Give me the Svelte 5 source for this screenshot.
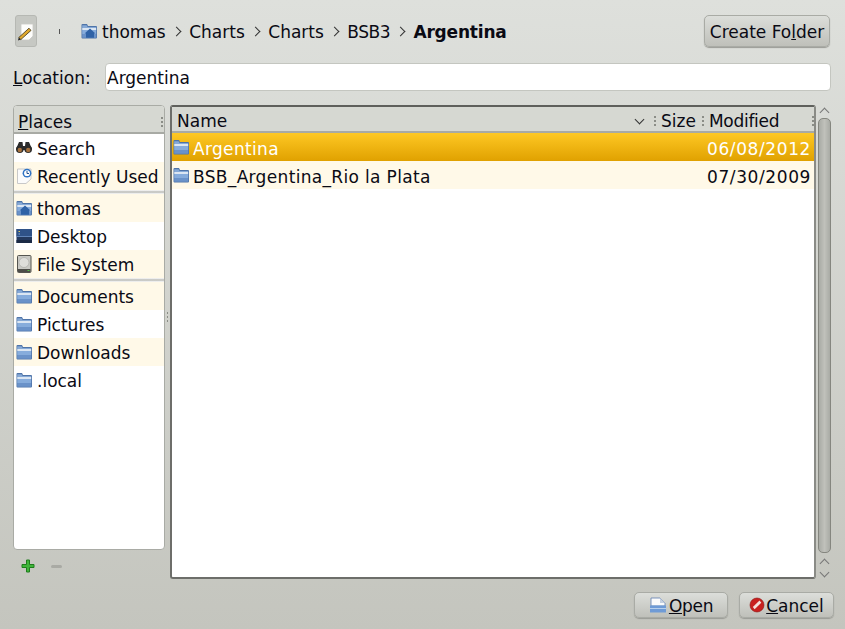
<script>
  const crumbs = ["Charts", "Charts", "BSB3"];
  const places = [
    [
      { name: "Search", icon: "search" },
      { name: "Recently Used", icon: "recent", alt: true },
    ],
    [
      { name: "thomas", icon: "home", alt: true },
      { name: "Desktop", icon: "desktop" },
      { name: "File System", icon: "disk", alt: true },
    ],
    [
      { name: "Documents", icon: "folder", alt: true },
      { name: "Pictures", icon: "folder" },
      { name: "Downloads", icon: "folder", alt: true },
      { name: ".local", icon: "folder" },
    ],
  ];
  const files = [
    { name: "Argentina", date: "06/08/2012", selected: true },
    { name: "BSB_Argentina_Rio la Plata", date: "07/30/2009" },
  ];
</script>

{#snippet folder(home)}
  <svg class="icon" viewBox="0 0 16 16">
    <path d="M0.5 2 Q0.5 1 1.5 1 L6 1 L7 3 L15 3 Q16 3 16 4 L16 14.5 Q16 15.5 15 15.5 L1.5 15.5 Q0.5 15.5 0.5 14.5Z" fill="#4f74a8" />
    <path d="M1.2 2.2 L5.6 2.2 L6.6 4 L15.2 4 L15.2 5 L1.2 5Z" fill="#86a9d6" />
    <path d="M1.2 5 L15.2 5 L15.2 7 L1.2 7Z" fill="#dbe6f3" />
    <path d="M1.2 7 L15.2 7 L15.2 11 L1.2 11Z" fill="#86acdc" />
    <path d="M1.2 11 L15.2 11 L15.2 14.8 L1.2 14.8Z" fill="#6a92c9" />
    {#if home}
      <path d="M3.6 10.5 L9 5.6 L14.4 10.5 L13 10.5 L13 14.8 L5 14.8 L5 10.5Z" fill="#2f62a6" />
    {/if}
  </svg>
{/snippet}

{#snippet icon(kind)}
  {#if kind === "search"}
    <svg class="icon" viewBox="0 0 16 16">
      <path d="M3 2 L6.5 2 L7 6 L9 6 L9.5 2 L13 2 L16 9 L9 10 L7 10 L0 9Z" fill="#2b2b2b" />
      <circle cx="3.8" cy="9.2" r="3.8" fill="#2b2b2b" />
      <circle cx="12.2" cy="9.2" r="3.8" fill="#2b2b2b" />
      <circle cx="3.8" cy="10" r="2.2" fill="#a5703c" />
      <circle cx="12.2" cy="10" r="2.2" fill="#a5703c" />
    </svg>
  {:else if kind === "recent"}
    <svg class="icon" viewBox="0 0 16 16">
      <path d="M1.5 1 L15 1 L15 11 L10 15.5 L1.5 15.5Z" fill="#fbfbfb" stroke="#c8c8c8" />
      <circle cx="11" cy="5.2" r="4.4" fill="#2f73c4" />
      <circle cx="11" cy="5.2" r="2.9" fill="#fff" />
      <path d="M11 3 L11 5.5 L13 5.5" fill="none" stroke="#1f4f90" />
    </svg>
  {:else if kind === "home"}
    {@render folder(true)}
  {:else if kind === "desktop"}
    <svg class="icon" viewBox="0 0 16 16">
      <rect x="0.5" y="1" width="15.5" height="14" fill="#24395e" />
      <rect x="0.5" y="1" width="15.5" height="7" fill="#2f5288" />
      <rect x="0.5" y="8" width="15.5" height="1" fill="#5f83b8" />
      <rect x="0.5" y="12" width="15.5" height="3" fill="#1b2a46" />
      <rect x="2.5" y="3" width="1.5" height="1" fill="#d8c860" />
      <rect x="2.5" y="5.5" width="1.5" height="1" fill="#8fb0d8" />
    </svg>
  {:else if kind === "disk"}
    <svg class="icon tall" viewBox="0 0 16 18">
      <rect x="1.5" y="0.5" width="13.5" height="17" rx="1" fill="#c9c9c4" stroke="#55554f" />
      <circle cx="8" cy="7.5" r="5" fill="#dededa" stroke="#a5a5a0" stroke-width="0.6" />
      <rect x="2" y="14" width="12.5" height="3" fill="#4d4d48" />
      <rect x="11.5" y="15" width="2" height="1" fill="#59c04b" />
    </svg>
  {:else}
    {@render folder(false)}
  {/if}
{/snippet}

<div class="dialog">
  <div class="toolbar">
    <button class="edit" aria-label="Edit path">
      <svg viewBox="0 0 16 18" width="16" height="18">
        <path d="M3 1 L15 1 L15 13 L11 17 L3 17Z" fill="#fdfdfb" stroke="#c9c9c5" stroke-width="0.8" />
        <path d="M0.8 14.5 L11 5.2 L13 7.4 L2.8 16.6Z" fill="#e0a92e" stroke="#3e3316" stroke-width="0.8" />
        <path d="M0 17.6 L0.8 14.5 L2.8 16.6Z" fill="#222" />
      </svg>
    </button>
    <span class="tick"></span>
    <nav class="crumbs">
      <span class="crumb first">{@render folder(true)}<span class="label">thomas</span></span>
      {#each crumbs as crumb}
        <span class="chev"></span>
        <span class="crumb label" class:short={crumb === "BSB3"}>{crumb}</span>
      {/each}
      <span class="chev"></span>
      <span class="crumb label current">Argentina</span>
    </nav>
    <button class="btn create">Create Fo<u>l</u>der</button>
  </div>

  <div class="location">
    <span class="loc-label"><u>L</u>ocation:</span>
    <div class="loc-input">Argentina</div>
  </div>

  <div class="main">
    <div class="side">
      <div class="places">
        <div class="head places-head"><span><u>P</u>laces</span><i class="grip"></i></div>
        {#each places as group, g}
          {#if g > 0}<div class="sep"></div>{/if}
          {#each group as p}
            <div class="row place" class:alt={p.alt}>
              {@render icon(p.icon)}<span class="label">{p.name}</span>
            </div>
          {/each}
        {/each}
      </div>
      <div class="place-tools">
        <svg class="plus" viewBox="0 0 14 14" width="14" height="14">
          <path d="M5.5 1 L8.5 1 L8.5 5.5 L13 5.5 L13 8.5 L8.5 8.5 L8.5 13 L5.5 13 L5.5 8.5 L1 8.5 L1 5.5 L5.5 5.5Z" fill="#3fb53a" stroke="#1f7d1c" />
        </svg>
        <span class="minus"></span>
      </div>
    </div>

    <div class="splitter"><i class="grip"></i></div>

    <div class="files">
      <div class="head files-head">
        <span class="col-name">Name</span>
        <span class="sort"></span>
        <i class="grip"></i>
        <span class="col-size">Size</span>
        <i class="grip"></i>
        <span class="col-date">Modified</span>
        <i class="grip"></i>
      </div>
      {#each files as f}
        <div class="row file" class:selected={f.selected} class:alt={!f.selected}>
          {@render folder(false)}
          <span class="fname">{f.name}</span>
          <span class="fdate">{f.date}</span>
        </div>
      {/each}
    </div>

    <div class="scrollbar">
      <span class="arrow up"></span>
      <div class="thumb"></div>
      <span class="arrow up low"></span>
      <span class="arrow down"></span>
    </div>
  </div>

  <div class="footer">
    <button class="btn foot open">
      <svg viewBox="0 0 18 16" width="18" height="16">
        <path d="M2 1 L11 1 L16 6 L16 9 L2 9Z" fill="#fbfbfb" stroke="#5f7fb0" stroke-width="0.8" />
        <path d="M11 1 L11 6 L16 6Z" fill="#c5d0e0" />
        <rect x="1" y="8.5" width="16" height="7" fill="#6f9bd6" />
        <rect x="1" y="11" width="16" height="1" fill="#b8d0ec" />
      </svg>
      <span><u>O</u>pen</span>
    </button>
    <button class="btn foot cancel">
      <svg viewBox="0 0 16 16" width="16" height="16">
        <circle cx="8" cy="8" r="7" fill="#c8201f" stroke="#8d1212" stroke-width="0.6" />
        <path d="M3.8 10 L10.5 3.6 L12.3 5.8 L5.6 12.2Z" fill="#f4e0dc" />
      </svg>
      <span><u>C</u>ancel</span>
    </button>
  </div>
</div>

<style>
  :global(body) {
    margin: 0;
  }
  .dialog {
    box-sizing: border-box;
    width: 845px;
    height: 629px;
    padding: 15px 11px 11px 13px;
    display: flex;
    flex-direction: column;
    background: linear-gradient(#dee0dc, #c4c5be);
    font: 17px "DejaVu Sans", sans-serif;
    color: #0a0a14;
    overflow: hidden;
  }
  button {
    font: inherit;
    color: inherit;
    padding: 0;
  }
  .toolbar {
    display: flex;
    align-items: center;
    height: 32px;
  }
  .edit {
    width: 22px;
    height: 32px;
    margin-left: 2px;
    padding-top: 1px;
    display: flex;
    align-items: center;
    justify-content: center;
    background: #c6c8c3;
    border: 1px solid #b6b8b3;
    border-radius: 3px;
  }
  .tick {
    width: 1px;
    height: 5px;
    background: #555;
    margin-left: 22px;
  }
  .crumbs {
    display: flex;
    align-items: center;
    margin-left: 21px;
    flex: 1;
  }
  .crumb {
    display: flex;
    align-items: center;
    gap: 5px;
  }
  .label {
    padding-top: 1px;
  }
  .short {
    letter-spacing: -0.5px;
  }
  .current {
    font-weight: bold;
    letter-spacing: -0.2px;
  }
  .chev {
    width: 6px;
    height: 6px;
    margin: 0 9.5px 0 7px;
    border-top: 1.5px solid #333;
    border-right: 1.5px solid #333;
    transform: rotate(45deg);
  }
  .btn {
    background: linear-gradient(#dcdeda, #bfc0ba);
    border: 1px solid #a9aba5;
    border-radius: 5px;
    box-shadow: 0 1px 1px #9a9b95;
  }
  .create {
    width: 126px;
    height: 32px;
    margin-right: 4px;
    padding-top: 1px;
  }
  .location {
    display: flex;
    align-items: center;
    margin-top: 16px;
    height: 28px;
  }
  .loc-label {
    width: 92px;
    padding-top: 1px;
  }
  .loc-input {
    width: 726px;
    height: 28px;
    line-height: 28px;
    box-sizing: border-box;
    padding-left: 1px;
    background: #fff;
    border: 1px solid #c4c6c0;
    border-radius: 4px;
  }
  .main {
    display: flex;
    margin-top: 14px;
    height: 474px;
  }
  .side {
    width: 152px;
    display: flex;
    flex-direction: column;
  }
  .places {
    box-sizing: border-box;
    height: 445px;
    background: #fff;
    border: 1px solid #a9aba5;
    border-radius: 4px;
    overflow: hidden;
  }
  .head {
    display: flex;
    align-items: center;
    box-sizing: border-box;
    background: #d6d8d2;
    border-bottom: 2px solid #a8aaa4;
  }
  .places-head {
    height: 28px;
    padding: 5px 1px 0 4px;
    justify-content: space-between;
  }
  .grip {
    display: block;
    flex: none;
    width: 2px;
    height: 10px;
    background: repeating-linear-gradient(#8b8d87 0 2px, transparent 2px 4px);
  }
  .row {
    display: flex;
    align-items: center;
    height: 28px;
    white-space: nowrap;
  }
  .place {
    gap: 5px;
    padding-left: 2px;
  }
  .alt {
    background: #fff9e8;
  }
  .sep {
    height: 4px;
    background: linear-gradient(#fff, #b8b9b5 50%, #fff);
  }
  .icon {
    width: 16px;
    height: 16px;
    flex: none;
  }
  .icon.tall {
    height: 18px;
  }
  .place-tools {
    display: flex;
    align-items: center;
    gap: 16px;
    padding: 9px 0 0 8px;
  }
  .minus {
    width: 11px;
    height: 3px;
    background: #a9aaa4;
    border-radius: 2px;
  }
  .splitter {
    width: 5px;
    display: flex;
    align-items: center;
    justify-content: center;
  }
  .splitter .grip {
    width: 1px;
    margin-bottom: 50px;
  }
  .files {
    box-sizing: border-box;
    width: 646px;
    height: 474px;
    background: #fff;
    border: 2px solid #6d6e6a;
    border-top-color: #5f605c;
    border-right-color: #8a8b86;
    border-radius: 3px;
    overflow: hidden;
  }
  .files-head {
    height: 26px;
    padding: 4px 0 0 5px;
  }
  .col-name {
    flex: 1;
  }
  .sort {
    width: 6px;
    height: 6px;
    margin: -4px 11px 0 0;
    border-right: 1.5px solid #333;
    border-bottom: 1.5px solid #333;
    transform: rotate(45deg);
  }
  .col-size {
    width: 41px;
    margin-left: 5px;
  }
  .col-date {
    width: 103px;
    margin-left: 5px;
    letter-spacing: -0.3px;
  }
  .file {
    gap: 4px;
    padding: 0 3px 0 1px;
  }
  .fname {
    flex: 1;
    padding-top: 3px;
    letter-spacing: 0.33px;
  }
  .fdate {
    padding-top: 3px;
    letter-spacing: 0.6px;
  }
  .selected {
    background: linear-gradient(#fec824, #e0a100);
    color: #fff;
  }
  .scrollbar {
    box-sizing: border-box;
    width: 17px;
    padding-bottom: 3px;
    display: flex;
    flex-direction: column;
    align-items: center;
  }
  .arrow {
    width: 6px;
    height: 6px;
    flex: none;
    border-top: 1px solid #777;
    border-left: 1px solid #777;
    transform: rotate(45deg);
  }
  .arrow.up {
    margin-top: 4px;
  }
  .arrow.low {
    margin-top: 7px;
  }
  .arrow.down {
    transform: rotate(225deg);
    margin-top: 2px;
  }
  .thumb {
    box-sizing: border-box;
    width: 13px;
    flex: 1;
    margin-top: 2px;
    background: linear-gradient(90deg, #a9aba5, #c0c1bb 50%, #a9aba5);
    border: 1px solid #85867f;
    border-radius: 5px;
  }
  .footer {
    display: flex;
    justify-content: flex-end;
    gap: 11px;
    margin-top: 13px;
  }
  .foot {
    height: 26px;
    display: flex;
    align-items: center;
    justify-content: center;
    gap: 2px;
  }
  .foot span {
    padding-top: 1px;
  }
  .open {
    width: 94px;
    letter-spacing: -0.3px;
  }
  .cancel {
    width: 95px;
    gap: 1px;
  }
</style>
